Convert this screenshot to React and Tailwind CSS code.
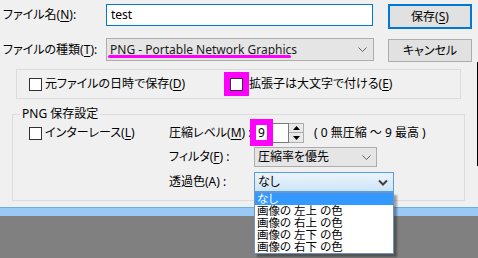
import React from "react";

function Mn({ children }) {
  return <span className="underline decoration-1 underline-offset-[2px]">{children}</span>;
}

function Checkbox() {
  return <span className="block h-[13px] w-[13px] shrink-0 border border-[#333333] bg-white" />;
}

function Chevron({ bold }) {
  return bold ? (
    <svg width="10" height="7" viewBox="0 0 10 7" className="shrink-0">
      <path d="M1 1.5l4 4 4-4" fill="none" stroke="#404040" strokeWidth="2" />
    </svg>
  ) : (
    <svg width="9" height="5" viewBox="0 0 9 5" className="shrink-0">
      <path d="M0.5 0.5l4 4 4-4" fill="none" stroke="#606060" strokeWidth="1" />
    </svg>
  );
}

const listItems = ["画像の 左上 の色", "画像の 右上 の色", "画像の 左下 の色", "画像の 右下 の色"];

export default function App() {
  return (
    <div className="relative h-[258px] w-[478px] overflow-hidden bg-[#808080] font-['Noto_Sans','Noto_Sans_CJK_JP',sans-serif] text-[12px] leading-[16px] text-black [font-feature-settings:'palt']">
      <div className="relative h-[207px] bg-[#f0f0f0]">
        <div className="flex items-start pt-[4px]">
          <div className="w-[106px] pl-[3px] pt-[3px]">
            ファイル名(<Mn>N</Mn>):
          </div>
          <div className="h-[22px] w-[267px] border border-[#0078d7] bg-white pl-[4px] leading-[20px]">test</div>
          <div className="ml-[15px] flex h-[25px] w-[84px] items-center justify-center border-2 border-[#0078d7] bg-[#e1e1e1]">
            保存(<Mn>S</Mn>)
          </div>
        </div>

        <div className="mt-[9px] flex items-start">
          <div className="w-[106px] pl-[3px] pt-[4px]">
            ファイルの種類(<Mn>T</Mn>):
          </div>
          <div className="relative flex h-[23px] w-[268px] items-center border border-[#adadad] bg-[#e5e5e5] pl-[3px] pr-[6px]">
            <span className="text-[#1a1a1a]">PNG - Portable Network Graphics</span>
            <span className="ml-auto">
              <Chevron />
            </span>
            <span className="absolute left-[1px] top-[16px] h-[3px] w-[183px] rounded-full bg-[#ff00ff]" />
          </div>
          <div className="ml-[14px] mt-[1px] flex h-[23px] w-[84px] items-center justify-center border border-[#adadad] bg-[#e1e1e1]">
            キャンセル
          </div>
        </div>

        <div className="ml-[16px] mt-[7px] flex h-[30px] w-[445px] items-center border border-[#dcdcdc] pl-[12px]">
          <div className="flex w-[195px] items-center gap-[3px]">
            <Checkbox />
            <span>
              元ファイルの日時で保存(<Mn>D</Mn>)
            </span>
          </div>
          <div className="flex h-[24px] w-[25px] items-center justify-center bg-[#ff00ff]">
            <Checkbox />
          </div>
          <span>
            拡張子は大文字で付ける(<Mn>E</Mn>)
          </span>
        </div>

        <div className="relative ml-[12px] mt-[15px] h-[87px] w-[453px] border border-[#dcdcdc] pl-[16px] pt-[8px]">
          <div className="absolute left-[7px] top-[-9px] bg-[#f0f0f0] px-[2px]">PNG 保存設定</div>

          <div className="flex h-[20px] items-center">
            <div className="flex w-[140px] items-center gap-[3px]">
              <Checkbox />
              <span>
                インターレース(<Mn>L</Mn>)
              </span>
            </div>
            <div className="w-[85px]">
              圧縮レベル(<Mn>M</Mn>) :
            </div>
            <div className="relative flex h-[20px]">
              <div className="h-[20px] w-[35px] border border-[#7a7a7a] bg-white" />
              <div className="flex w-[15px] flex-col border border-l-0 border-[#adadad] bg-[#e9e9e9]">
                <div className="flex h-[9px] items-center justify-center border-b border-[#adadad]">
                  <svg width="7" height="4" viewBox="0 0 7 4">
                    <path d="M3.5 0L7 4H0z" fill="#000" />
                  </svg>
                </div>
                <div className="flex flex-1 items-center justify-center">
                  <svg width="7" height="4" viewBox="0 0 7 4">
                    <path d="M0 0h7L3.5 4z" fill="#000" />
                  </svg>
                </div>
              </div>
              <div className="absolute left-[-4px] top-[-4px] flex h-[27px] w-[23px] items-center border-[6px] border-[#ff00ff] bg-white pl-[2px]">
                9
              </div>
            </div>
            <div className="ml-[10px]">( 0 無圧縮 ～ 9 最高 )</div>
          </div>

          <div className="mt-[4px] flex h-[20px] items-center">
            <div className="w-[140px]" />
            <div className="w-[85px]">
              フィルタ(<Mn>F</Mn>) :
            </div>
            <div className="flex h-[20px] w-[123px] items-center border border-[#adadad] bg-[#e5e5e5] pl-[3px] pr-[5px]">
              <span>圧縮率を優先</span>
              <span className="ml-auto">
                <Chevron />
              </span>
            </div>
          </div>

          <div className="mt-[5px] flex h-[20px] items-center">
            <div className="w-[140px]" />
            <div className="w-[85px]">透過色(A) :</div>
            <div className="relative z-10 w-[140px]">
              <div className="flex h-[20px] items-center border border-[#569de5] bg-gradient-to-b from-[#ecf4fc] to-[#cfe4f8] pl-[3px] pr-[5px]">
                <span>なし</span>
                <span className="ml-auto">
                  <Chevron bold />
                </span>
              </div>
              <div className="absolute left-0 top-[20px] w-[140px] border border-[#6f94c2] bg-white text-[11.5px] shadow-[3px_3px_2px_rgba(0,0,0,0.35)]">
                <div className="h-[12px] bg-[#3399ff] pl-[2px] leading-[12px] text-white">なし</div>
                {listItems.map((item) => (
                  <div key={item} className="h-[12px] whitespace-pre pl-[2px] leading-[12px]">
                    {item}
                  </div>
                ))}
              </div>
            </div>
          </div>
        </div>

        <span className="absolute right-0 top-[62px] h-[104px] w-px bg-black" />
      </div>
      <div className="h-[9px] border-t border-[#6aaee8] bg-[#99c9f5]" />
    </div>
  );
}
